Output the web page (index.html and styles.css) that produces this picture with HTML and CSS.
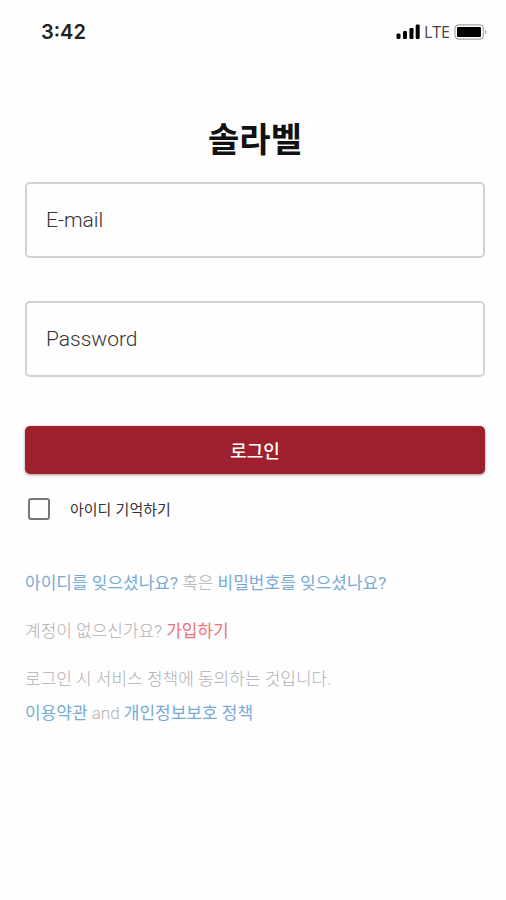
FILE: index.html
```html
<!DOCTYPE html>
<html lang="ko">
<head>
<meta charset="utf-8">
<meta name="viewport" content="width=device-width, initial-scale=1">
<title>솔라벨</title>
<link rel="stylesheet" href="styles.css">
</head>
<body>
<header class="status">
  <time class="clock">3:42</time>
  <div class="indicators">
    <svg class="signal" width="24" height="16" viewBox="0 0 24 16" aria-hidden="true">
      <rect x="0.5" y="9.5" width="4" height="5.5" rx="1.3"/>
      <rect x="7" y="7" width="4" height="8" rx="1.3"/>
      <rect x="13.5" y="4" width="4" height="11" rx="1.3"/>
      <rect x="19.7" y="0.5" width="4" height="14.5" rx="1.3"/>
    </svg>
    <span class="network">LTE</span>
    <svg class="battery" width="34" height="16" viewBox="0 0 34 16" aria-hidden="true">
      <rect x="0.9" y="0.9" width="28.5" height="14.2" rx="4" fill="none" stroke="#a8a8a8" stroke-width="1.3"/>
      <rect x="3" y="3" width="24" height="10" rx="1"/>
      <path d="M31.3 5.6c1.6.7 1.6 4.1 0 4.8z" fill="#999"/>
    </svg>
  </div>
</header>
<main class="login">
  <h1 class="title">솔라벨</h1>
  <form class="form">
    <input class="field" type="email" placeholder="E-mail" aria-label="E-mail">
    <input class="field" type="password" placeholder="Password" aria-label="Password">
    <button class="submit" type="submit">로그인</button>
    <label class="remember"><input class="check" type="checkbox"><span>아이디 기억하기</span></label>
  </form>
  <div class="notes">
    <p><a href="#">아이디를 잊으셨나요?</a> 혹은 <a href="#">비밀번호를 잊으셨나요?</a></p>
    <p>계정이 없으신가요? <a class="join" href="#">가입하기</a></p>
    <p class="policy">로그인 시 서비스 정책에 동의하는 것입니다.<br><a href="#">이용약관</a> and <a href="#">개인정보보호 정책</a></p>
  </div>
</main>
</body>
</html>
```
FILE: styles.css
```css
* {
  box-sizing: border-box;
}

body {
  margin: 0;
  background: #fefefe;
  color: #222;
  font-family: Roboto, "Noto Sans CJK KR", sans-serif;
}

.status {
  display: flex;
  align-items: center;
  justify-content: space-between;
  height: 64px;
  padding: 0 18px 0 41px;
}

.clock {
  font: 600 20px/24px Inter, sans-serif;
}

.indicators {
  display: flex;
  align-items: center;
  gap: 4px;
}

.network {
  color: #444;
  font: 500 16px/20px "Open Sans", sans-serif;
}

.login {
  padding: 48px 21px 24px 25px;
}

.title {
  margin: 0 0 18px;
  color: #111;
  font: 700 34px/52px "Noto Sans CJK KR", sans-serif;
  text-align: center;
}

.form {
  display: flex;
  flex-direction: column;
}

.field {
  width: 100%;
  height: 76px;
  margin-bottom: 43px;
  padding: 0 19px;
  border: 2px solid #d2d2d2;
  border-radius: 5px;
  background: #fefefe;
  color: #333;
  font: 300 21px/28px Roboto, sans-serif;
}

.field::placeholder {
  color: #333;
  opacity: 1;
}

.submit {
  height: 48px;
  margin-top: 6px;
  padding: 0;
  border: 0;
  border-radius: 5px;
  background: #9f202d;
  box-shadow: 0 1px 3px rgba(0, 0, 0, 0.4);
  color: #fff;
  font: 500 18px/24px "Noto Sans CJK KR", sans-serif;
}

.remember {
  display: flex;
  align-items: center;
  align-self: flex-start;
  gap: 20px;
  margin: 23px 0 0 3px;
  color: #333;
  font: 400 15px/24px "Noto Sans CJK KR", sans-serif;
}

.check {
  width: 22px;
  height: 22px;
  margin: 0;
  appearance: none;
  border: 2px solid #777;
  border-radius: 3px;
}

.check:checked {
  background: #9f202d;
}

.notes {
  margin-top: 45px;
  color: #b0b0b0;
  font: 300 17px/34px Roboto, "Noto Sans CJK KR", sans-serif;
}

.notes p {
  margin: 0 0 14px;
}

.notes a {
  color: #78aad6;
  font-weight: 400;
  text-decoration: none;
}

.notes .join {
  color: #ee7178;
}
```
